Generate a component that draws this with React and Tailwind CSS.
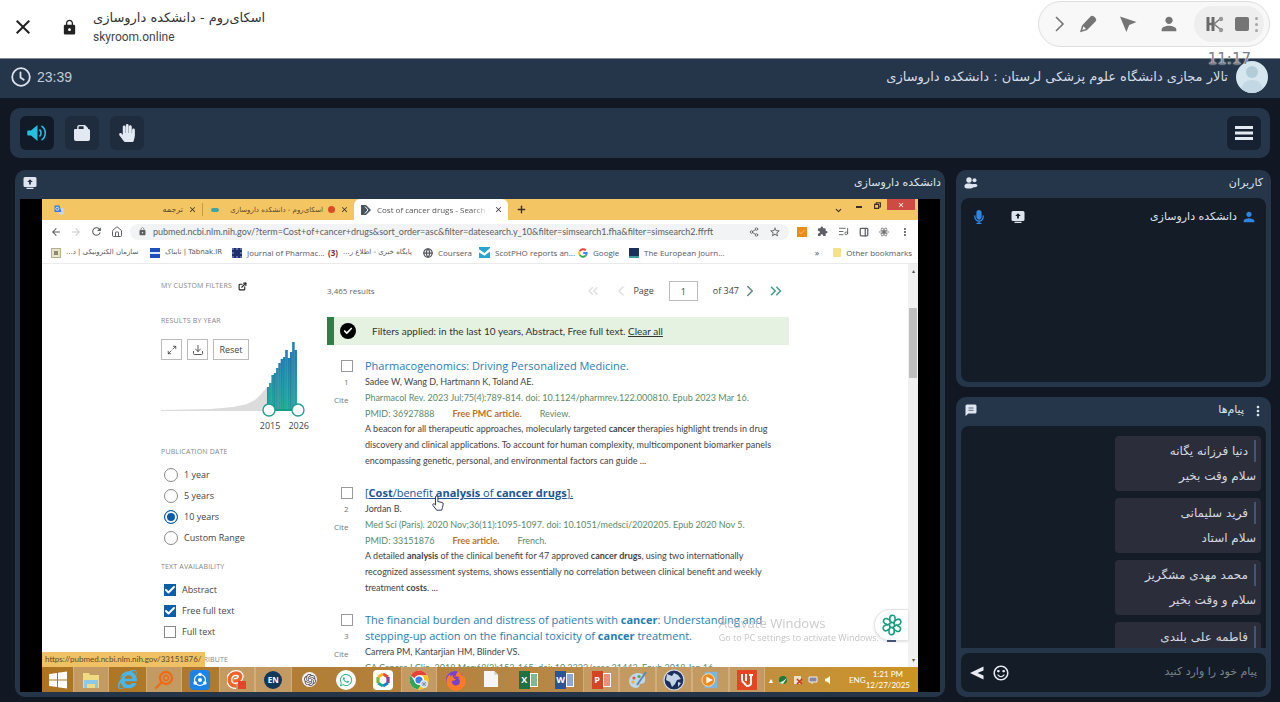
import React from "react";
import {
  MdClose, MdLock, MdPerson, MdMoreVert,
  MdArrowBack, MdArrowForward, MdRefresh, MdExtension, MdStarBorder, MdSentimentSatisfiedAlt,
} from "react-icons/md";
import { FaHandPaper, FaInternetExplorer, FaWhatsapp, FaFirefoxBrowser, FaMicrophone } from "react-icons/fa";
import { SiOpenai } from "react-icons/si";
import {
  Home, Share2, ChevronLeft, ChevronRight, ChevronsLeft, ChevronsRight, ChevronDown,
  Globe, Download, ExternalLink, ListMusic, PanelRight, Maximize2, Plus, Check,
} from "lucide-react";

const fa = "font-['DejaVu_Sans',sans-serif]";

function ScreenIcon({ className }) {
  return (
    <svg viewBox="0 0 14 14" className={className} fill="currentColor" aria-hidden="true">
      <path fillRule="evenodd" d="M2 1h10a1.500 1.500 0 0 1 1.500 1.500v7A1.500 1.500 0 0 1 12 11H2A1.500 1.500 0 0 1 .5 9.500v-7A1.500 1.500 0 0 1 2 1Zm5 2.300L4.200 6h1.900v2.400h1.800V6h1.900L7 3.300Z" />
      <path d="M3.500 11.700h7V13h-7z" />
    </svg>
  );
}

function TopBar() {
  return (
    <header className="flex h-[58px] shrink-0 items-start justify-between bg-white">
      <div className="flex items-center gap-[26px] pt-2 pl-[11px]">
        <button aria-label="Close" className="text-[#222]"><MdClose className="size-6" /></button>
        <div className="flex items-center gap-[15px]">
          <MdLock className="size-[17px] text-[#222]" />
          <div className="flex flex-col">
            <span dir="rtl" lang="fa" className={`${fa} text-[13px] leading-5 text-[#333]`}>اسکای‌روم - دانشکده داروسازی</span>
            <span className="font-['Roboto',sans-serif] text-xs leading-[18px] text-[#444]">skyroom.online</span>
          </div>
        </div>
      </div>
      <div className="mt-px mr-[10px] flex h-[46px] w-[232px] items-center rounded-full border border-[#dedede] bg-[#f8f8f8] pr-[5px] pl-[10px] text-[#757575]">
        <button aria-label="Collapse">
          <svg viewBox="0 0 20 20" className="size-5" fill="none" stroke="currentColor" strokeWidth="1.600"><path d="m7 3 7 7-7 7" /></svg>
        </button>
        <button aria-label="Draw" className="ml-[9px]">
          <svg viewBox="0 0 20 20" className="size-5" fill="currentColor">
            <path fillRule="evenodd" d="M12.500 2.500a2.500 2.500 0 0 1 3.500 0l1.500 1.500a2.500 2.500 0 0 1 0 3.500l-8.700 8.800-6.800 2 2-6.900 8.500-8.900ZM5.400 12.300l-1.100 3.800 3.700-1.200-2.600-2.600Z" />
          </svg>
        </button>
        <button aria-label="Pointer" className="ml-5">
          <svg viewBox="0 0 20 20" className="size-5" fill="currentColor"><path d="M2 2.500 18.500 8l-7.300 3-2.800 7L2 2.500Z" /></svg>
        </button>
        <button aria-label="Person" className="ml-5"><MdPerson className="size-[22px]" /></button>
        <div className="ml-[14px] flex h-9 flex-1 items-center rounded-full bg-[#eeeeee] pl-[11px]">
          <button aria-label="Share">
            <svg viewBox="0 0 20 20" className="size-5" fill="none" stroke="#777">
              <path d="M3 3v14M8 3v14" strokeWidth="3" stroke="#6a6a6a" />
              <path d="M3 10h6" strokeWidth="2.500" stroke="#6a6a6a" />
              <path d="m15 5-6 5 6 5" strokeWidth="1.500" />
              <circle cx="16" cy="5" r="2.200" fill="#999" stroke="none" /><circle cx="16" cy="16" r="2.200" fill="#999" stroke="none" />
            </svg>
          </button>
          <button aria-label="Stop" className="ml-[10px] size-[14px] rounded-[2px] bg-[#757575]" />
          <button aria-label="More" className="ml-[6px] flex flex-col gap-[3px]">
            <i className="size-[3px] rounded-full bg-[#a5a5a5]" /><i className="size-[3px] rounded-full bg-[#a5a5a5]" /><i className="size-[3px] rounded-full bg-[#a5a5a5]" />
          </button>
        </div>
      </div>
    </header>
  );
}

function RoomBar() {
  return (
    <div className="relative flex h-10 shrink-0 items-center justify-between border-t border-[#7c8795] bg-[#25354a] pr-3 pb-[3px] pl-[11px]">
      <div className="flex items-center gap-[6px] text-[#dbe3ee]">
        <svg viewBox="0 0 20 20" className="size-5" fill="none" stroke="currentColor" strokeWidth="1.800" strokeLinecap="round">
          <circle cx="10" cy="10" r="8.800" /><path d="M9.500 5.500v5l3.200 2.300" />
        </svg>
        <time className="font-['Liberation_Sans',sans-serif] text-sm leading-4 text-[#c3ccd8]">23:39</time>
      </div>
      <div className="flex items-center gap-2">
        <h1 dir="rtl" lang="fa" className={`${fa} text-[13px] leading-5 text-[#d5dce6]`}>تالار مجازی دانشگاه علوم پزشکی لرستان : دانشکده داروسازی</h1>
        <div className="size-8 overflow-hidden rounded-full bg-[#d5e6ef]">
          <svg viewBox="0 0 32 32" className="size-8"><circle cx="16" cy="11" r="6" fill="#b4cbd8" /><path d="M5 32c0-9 4-13 11-13s11 4 11 13Z" fill="#c2d8e4" /></svg>
        </div>
      </div>
      <span className="absolute -top-2 right-[29px] font-['DejaVu_Sans',sans-serif] text-[15px] leading-4 text-[#7b828c] [text-shadow:0_0_1px_#fff,0_0_2px_#fff]">11:17</span>
    </div>
  );
}

function ToolBar() {
  return (
    <nav className="mx-[10px] mt-[10px] flex h-[50px] shrink-0 items-center justify-between rounded-[10px] bg-[#25354a] pr-[9px] pl-[10px] text-[#e3e9f2]">
      <div className="flex gap-[11px]">
        <button aria-label="Sound" className="grid size-[34px] place-items-center rounded-md bg-[#111b28] text-[#26bfe2]">
          <svg viewBox="0 0 20 18" className="h-[18px] w-5" fill="currentColor">
            <path d="M1 6.500h3L10.500 1v16L4 11.500H1A1 1 0 0 1 .3 11V7a1 1 0 0 1 .7-.5Z" />
            <path d="M12.500 5.500c2 1.500 2 5.500 0 7M14.500 2c5 3 5 11 0 14" fill="none" stroke="currentColor" strokeWidth="1.600" />
          </svg>
        </button>
        <button aria-label="Files" className="grid size-[34px] place-items-center rounded-md bg-[#1f2c3d]">
          <svg viewBox="0 0 18 18" className="size-[18px]" fill="currentColor">
            <path fillRule="evenodd" d="M2 5h2.200V3a2 2 0 0 1 2-2H12l3 3v1h.500A1.500 1.500 0 0 1 17 6.500V15a2 2 0 0 1-2 2H3a2 2 0 0 1-2-2V6a1 1 0 0 1 1-1Zm3.600 0h5V2.300H6.500a1 1 0 0 0-.9 1V5Z" />
          </svg>
        </button>
        <button aria-label="Raise hand" className="grid size-[34px] place-items-center rounded-md bg-[#1f2c3d]"><FaHandPaper className="size-[18px]" /></button>
      </div>
      <button aria-label="Menu" className="grid size-[34px] place-items-center rounded-md bg-[#162231]">
        <svg viewBox="0 0 18 16" className="h-4 w-[18px]" fill="currentColor"><path d="M0 1h18v3H0zM0 6.500h18v3H0zM0 12h18v3H0z" /></svg>
      </button>
    </nav>
  );
}

function TabStrip() {
  return (
    <div className="flex h-[21px] shrink-0 items-stretch bg-[#f4c663] text-[8px] leading-[10px] text-[#5c4a28]">
      <div className="flex w-[160px] items-center pl-3">
        <svg viewBox="0 0 10 10" className="size-[10px]"><path d="M3 3h6.500v6.500H5z" fill="#c9d6ea" /><path d="M.5.500h5L7.500 7h-7z" fill="#3f7de0" /><circle cx="3.300" cy="3.700" r="1.500" fill="none" stroke="#fff" strokeWidth=".8" /></svg>
        <span dir="rtl" lang="fa" className={`${fa} ml-auto`}>ترجمه</span>
        <MdClose className="mx-[5px] size-[9px] text-[#333]" />
      </div>
      <div className="my-1 border-l border-[#c49a45]" />
      <div className="flex w-[151px] items-center pl-2">
        <span className="h-1 w-2 rounded-full bg-[#3aa6a8]" />
        <span dir="rtl" lang="fa" className={`${fa} ml-auto text-[7px] whitespace-nowrap`}>اسکای‌روم - دانشکده داروسازی</span>
        <span className="mx-[5px] size-[7px] shrink-0 rounded-full bg-[#dd4b25]" />
        <MdClose className="mr-[5px] size-[9px] shrink-0 text-[#333]" />
      </div>
      <div className="flex w-[154px] items-center rounded-t-md bg-white pl-[7px] text-[#555]">
        <svg viewBox="0 0 10 10" className="size-[10px] shrink-0"><path d="M0 0h5l5 5-5 5H0z" fill="#4a545e" /><path d="m4 1.500 3 3.500-3 3.500" stroke="#fff" fill="none" /></svg>
        <span className="ml-[6px] flex-1 overflow-hidden whitespace-nowrap [mask-image:linear-gradient(to_right,#000_85%,transparent)]">Cost of cancer drugs - Search Re</span>
        <MdClose className="mx-[5px] size-[9px] shrink-0 text-[#333]" />
      </div>
      <button aria-label="New tab" className="pl-2"><Plus className="size-[11px] text-[#3b3020]" strokeWidth={3} /></button>
      <div className="ml-auto flex items-start pr-[3px] text-[#3b3020]">
        <ChevronDown className="mt-[7px] mr-[13px] size-[9px]" strokeWidth={3} />
        <button aria-label="Minimize" className="mt-[7px] mr-3 h-[2px] w-[6px] bg-current" />
        <button aria-label="Restore" className="mt-[3px] mr-[6px]">
          <svg viewBox="0 0 8 8" className="size-[7px]" fill="none" stroke="currentColor" strokeWidth="1.300"><path d="M.7 2.700h4.600v4.600H.7zM2.500 2.500V.8h4.800v4.700H5.500" /></svg>
        </button>
        <button aria-label="Close window" className="grid h-[11px] w-7 place-items-center bg-[#ce4a45]"><MdClose className="size-2 text-white" /></button>
      </div>
    </div>
  );
}

function AddressBar() {
  return (
    <div className="flex h-[23px] shrink-0 items-center bg-white pr-[7px] pl-2 text-[#5c5f63]">
      <div className="flex items-center gap-2">
        <MdArrowBack className="size-3" />
        <MdArrowForward className="size-3 text-[#ccc]" />
        <MdRefresh className="size-[13px]" />
        <Home className="size-3" />
      </div>
      <div className="ml-[7px] flex h-4 min-w-0 flex-1 items-center rounded-full bg-[#f2f3f4] px-2">
        <MdLock className="size-[9px] shrink-0" />
        <input aria-label="Address" readOnly className="ml-[6px] min-w-0 flex-1 bg-transparent font-['Lato',sans-serif] text-[9px] outline-none" defaultValue="pubmed.ncbi.nlm.nih.gov/?term=Cost+of+cancer+drugs&sort_order=asc&filter=datesearch.y_10&filter=simsearch1.fha&filter=simsearch2.ffrft" />
        <Share2 className="size-[10px]" />
        <MdStarBorder className="ml-[10px] size-3" />
      </div>
      <div className="ml-2 flex items-center gap-[10px]">
        <span className="grid size-[10px] place-items-center bg-[#f08a16]"><Check className="size-2 text-[#ffd9a8]" /></span>
        <MdExtension className="size-[11px]" />
        <ListMusic className="size-[11px]" />
        <PanelRight className="size-[10px]" strokeWidth={3} />
        <svg viewBox="0 0 12 12" className="size-[10px]" fill="none" stroke="#888" strokeWidth="1"><ellipse cx="6" cy="6" rx="5.500" ry="2" /><ellipse cx="6" cy="6" rx="5.500" ry="2" transform="rotate(60 6 6)" /><ellipse cx="6" cy="6" rx="5.500" ry="2" transform="rotate(120 6 6)" /><circle cx="6" cy="6" r="1.500" fill="#555" /></svg>
        <MdMoreVert className="size-3" />
      </div>
    </div>
  );
}

function Mark({ icon, children, rtl, width }) {
  return (
    <a href="#" className={`flex shrink-0 items-center gap-[5px] ${width}`}>
      {icon}
      <span dir={rtl ? "rtl" : "ltr"} className={rtl ? "font-['DejaVu_Sans',sans-serif] text-[7px] whitespace-nowrap" : "text-[8px] whitespace-nowrap"}>{children}</span>
    </a>
  );
}

function Bookmarks() {
  return (
    <div className="flex h-[21px] shrink-0 items-center border-b border-[#e9eaec] bg-white pr-[6px] pb-[1px] pl-[9px] text-[#55585c]">
      <Mark rtl width="w-[99px]" icon={<span className="grid size-[10px] shrink-0 place-items-center border border-[#b3b08c] bg-[#e4e2cc]"><i className="size-1 bg-[#8f8c6c]" /></span>}>سازمان الکترونیکی | د...</Mark>
      <Mark rtl width="w-[82px]" icon={<span className="flex size-[10px] shrink-0 items-center bg-[#1c50c0]"><i className="h-[2px] w-full bg-[#dfe7fb]" /></span>}>Tabnak.IR | تابناک</Mark>
      <Mark width="w-[96px]" icon={<span className="size-[10px] shrink-0 border-2 border-dotted border-[#5c6cae] bg-[#20306f]" />}>Journal of Pharmac...</Mark>
      <Mark rtl width="w-[95px]" icon={<b className="shrink-0 text-[8px] text-[#7d2b2b]">(3)</b>}>پایگاه خبری - اطلاع ر...</Mark>
      <Mark width="w-14" icon={<Globe className="size-[10px] shrink-0" strokeWidth={3} />}>Coursera</Mark>
      <Mark width="w-[99px]" icon={<svg viewBox="0 0 10 10" className="size-[11px] shrink-0"><path fill="#27a5cf" d="M0 0h10v10H0z" /><path fill="#fff" d="m0 2 5 3.500L10 1v3L5 8 0 5z" /></svg>}>ScotPHO reports an...</Mark>
      <Mark width="w-[51px]" icon={
        <svg viewBox="0 0 24 24" className="size-[10px] shrink-0" fill="none" strokeWidth="4.500">
          <path stroke="#ea4335" d="M4.200 7.500A9 9 0 0 1 18.500 5.700" /><path stroke="#fbbc05" d="M4.200 16.500a9 9 0 0 1 0-9" /><path stroke="#34a853" d="M18 18.700A9 9 0 0 1 4.200 16.500" /><path stroke="#4285f4" d="M12.500 12H21a9 9 0 0 1-3 6.700" />
        </svg>}>Google</Mark>
      <Mark width="w-[90px]" icon={<span className="size-[10px] shrink-0 border-b-2 border-[#3c9aa0] bg-[#19305c]" />}>The European Journ...</Mark>
      <div className="ml-auto flex items-center gap-[14px]">
        <span className="text-[9px]">»</span>
        <Mark width="w-auto" icon={<span className="h-[9px] w-2 rounded-[1px] bg-[#f6e08a]" />}>Other bookmarks</Mark>
      </div>
    </div>
  );
}

const bars = [23, 27, 35, 37, 42, 47, 51, 53, 60, 52, 58, 68, 60];

function Timeline() {
  return (
    <div className="mt-3 grid w-[148px]">
      <div className="flex gap-[5px] [grid-area:1/1]">
        <button aria-label="Expand" className="grid size-[21px] place-items-center border border-[#bbb] text-[#444]"><Maximize2 className="size-[10px]" /></button>
        <button aria-label="Download" className="grid size-[21px] place-items-center border border-[#bbb] text-[#555]"><Download className="size-3" /></button>
        <button className="h-[21px] w-9 border border-[#bbb] text-[9px] text-[#444]">Reset</button>
      </div>
      <svg viewBox="0 0 148 80" className="mt-[1px] h-20 w-[148px] [grid-area:1/1]">
        <defs><linearGradient id="yr" gradientUnits="userSpaceOnUse" x1="0" y1="0" x2="0" y2="70"><stop offset="0.250" stopColor="#2380ba" /><stop offset="1" stopColor="#25b296" /></linearGradient></defs>
        <path d="M0 71v-1l50-1 22-2 14-3 8-4 6-6 6-7v24Z" fill="#dcdcdc" />
        {bars.map((h, i) => <rect key={i} x={106 + i * 2.300} y={70 - h} width="2.400" height={h} fill="url(#yr)" />)}
        {bars.map((h, i) => <rect key={i} x={106 + i * 2.300} y={70 - h} width=".6" height={h} fill="#176f94" opacity=".7" />)}
        <path d="M107 70h30" stroke="#159b8c" strokeWidth="2" />
        <circle cx="108" cy="70" r="6" fill="#fff" stroke="#1c9c93" strokeWidth="1.300" /><circle cx="137" cy="70" r="6" fill="#fff" stroke="#1c9c93" strokeWidth="1.300" />
      </svg>
      <div className="flex justify-end gap-2 text-[9px] leading-3 text-[#444]"><span>2015</span><span>2026</span></div>
    </div>
  );
}

const heading = "text-[7px] leading-3 tracking-wide text-[#858585] uppercase";

function Choice({ type, name, label, on }) {
  return (
    <label className="flex h-[21px] items-center gap-[6px] text-[9px] text-[#444]">
      {type === "radio" ? (
        <input type="radio" name={name} defaultChecked={on} className="ml-[3px] size-[14px] appearance-none rounded-full border border-[#888] bg-white checked:border-[#0a5ba8] checked:bg-[#0a5ba8] checked:shadow-[inset_0_0_0_2px_#fff]" />
      ) : (
        <span className="ml-[3px] grid size-3">
          <input type="checkbox" defaultChecked={on} className="size-3 appearance-none border border-[#888] [grid-area:1/1] checked:border-[#0b5ea8] checked:bg-[#0b5ea8]" />
          {on && <Check className="size-3 text-white [grid-area:1/1]" strokeWidth={4} />}
        </span>
      )}
      {label}
    </label>
  );
}

function Filters() {
  return (
    <aside className="w-[166px] shrink-0 pt-4">
      <h2 className={`${heading} flex items-center gap-[6px]`}>My custom filters <ExternalLink className="size-[9px] text-[#222]" strokeWidth={3} /></h2>
      <h2 className={`${heading} mt-[23px]`}>Results by year</h2>
      <Timeline />
      <fieldset className="mt-[14px]">
        <legend className={heading}>Publication date</legend>
        <div className="mt-[6px]">
          <Choice type="radio" name="date" label="1 year" />
          <Choice type="radio" name="date" label="5 years" />
          <Choice type="radio" name="date" label="10 years" on />
          <Choice type="radio" name="date" label="Custom Range" />
        </div>
      </fieldset>
      <fieldset className="mt-[13px]">
        <legend className={heading}>Text availability</legend>
        <div className="mt-[6px]">
          <Choice type="checkbox" label="Abstract" on />
          <Choice type="checkbox" label="Free full text" on />
          <Choice type="checkbox" label="Full text" />
        </div>
      </fieldset>
      <h2 className={`${heading} mt-3`}>Article attribute</h2>
    </aside>
  );
}

function Article({ n, title, authors, journal, pmid, free, kind, visited, children }) {
  return (
    <article className="mb-4 flex">
      <div className="w-[38px] shrink-0 text-[8px] text-[#777]">
        <input type="checkbox" aria-label={`Select result ${n}`} className="mt-[2px] ml-[14px] block size-3 appearance-none border border-[#999] bg-white" />
        <div className="mt-[3px] ml-[17px] leading-[14px]">{n}</div>
        <button className="mt-1 ml-[7px] block leading-[14px]">Cite</button>
      </div>
      <div className="min-w-0 flex-1 font-['Lato',sans-serif] text-[9px] leading-4 text-[#444]">
        <h3 className="font-['Open_Sans',sans-serif] text-[11px] leading-4"><a href="#" className={visited ? "text-[#205493] underline" : "text-[#1f7db3]"}>{title}</a></h3>
        <p>{authors}</p>
        <p className="text-[#5b8a68]">{journal}</p>
        <p className="flex h-[15px] gap-[18px] text-[#5b8a68]"><span>PMID: {pmid}</span><b className="text-[#c0701c]">{free}</b><span>{kind}</span></p>
        <p>{children}</p>
      </div>
    </article>
  );
}

function Results() {
  return (
    <main className="w-[462px] shrink-0 pt-[15px]">
      <div className="flex h-6 items-center text-[8px] text-[#444]">
        <span className="text-[#666]">3,465 results</span>
        <div className="ml-auto flex items-center pr-1 text-[9px]">
          <ChevronsLeft className="size-4 text-[#ddd]" />
          <ChevronLeft className="ml-3 size-4 text-[#ddd]" />
          <label htmlFor="page" className="ml-1">Page</label>
          <input id="page" defaultValue="1" className="mx-[15px] h-5 w-[29px] border border-[#bbb] text-center text-[9px]" />
          <span>of 347</span>
          <ChevronRight className="ml-[2px] size-[18px] text-[#5a8a80]" />
          <ChevronsRight className="ml-2 size-[18px] text-[#3f9b8e]" />
        </div>
      </div>
      <div className="mt-[14px] flex h-7 items-center border-l-[7px] border-[#2c8046] bg-[#e5f2e2] pl-[6px] font-['Lato',sans-serif] text-[10px] text-[#333]">
        <span className="mr-4 grid size-4 place-items-center rounded-full bg-black"><Check className="size-[10px] text-white" strokeWidth={4} /></span>
        Filters applied: in the last 10 years, Abstract, Free full text.&nbsp;<a href="#" className="underline">Clear all</a>
      </div>
      <div className="mt-[13px]">
        <Article n="1" title="Pharmacogenomics: Driving Personalized Medicine." authors="Sadee W, Wang D, Hartmann K, Toland AE." journal="Pharmacol Rev. 2023 Jul;75(4):789-814. doi: 10.1124/pharmrev.122.000810. Epub 2023 Mar 16." pmid="36927888" free="Free PMC article." kind="Review.">
          A beacon for all therapeutic approaches, molecularly targeted <b>cancer</b> therapies highlight trends in drug<br />discovery and clinical applications. To account for human complexity, multicomponent biomarker panels<br />encompassing genetic, personal, and environmental factors can guide ...
        </Article>
        <Article n="2" visited title={<>[<b>Cost</b>/benefit <b>analysis</b> of <b>cancer drugs</b>].</>} authors="Jordan B." journal="Med Sci (Paris). 2020 Nov;36(11):1095-1097. doi: 10.1051/medsci/2020205. Epub 2020 Nov 5." pmid="33151876" free="Free article." kind="French.">
          A detailed <b>analysis</b> of the clinical benefit for 47 approved <b>cancer drugs</b>, using two internationally<br />recognized assessment systems, shows essentially no correlation between clinical benefit and weekly<br />treatment <b>costs</b>. ...
        </Article>
        <Article n="3" title={<>The financial burden and distress of patients with <b>cancer</b>: Understanding and<br />stepping-up action on the financial toxicity of <b>cancer</b> treatment.</>} authors="Carrera PM, Kantarjian HM, Blinder VS." journal="CA Cancer J Clin. 2018 Mar;68(2):153-165. doi: 10.3322/caac.21443. Epub 2018 Jan 16." pmid="29338071" free="Free PMC article." kind="Review." />
      </div>
    </main>
  );
}

function Office({ letter, color, page }) {
  return (
    <span className="flex h-[18px] items-center">
      <b className="grid h-[18px] w-[11px] place-items-center text-[9px] text-white" style={{ background: color }}>{letter}</b>
      <i className="h-[14px] w-2 border border-white" style={{ background: page }} />
    </span>
  );
}

const apps = [
  { name: "Explorer", lit: true, icon: <svg viewBox="0 0 20 20" className="size-5"><path fill="#f0da83" d="M2 3h6l1 2h9v13H2z" /><path fill="#8cc9e8" d="M3 10h14v8h-3v-4H6v4H3z" /></svg> },
  { name: "Internet Explorer", icon: <FaInternetExplorer className="size-[19px] text-[#45b7ea]" /> },
  { name: "Search", lit: true, icon: <svg viewBox="0 0 20 20" className="size-5" fill="none" stroke="#ef6a16" strokeWidth="2.300"><circle cx="12" cy="8" r="6" /><circle cx="12" cy="8" r="2.500" strokeWidth="1.400" /><path d="m7.500 12.500-6 6" /></svg> },
  { name: "Share", icon: <svg viewBox="0 0 20 20" className="size-5"><rect width="20" height="20" rx="4" fill="#1c83e6" /><circle cx="10" cy="10" r="5.500" fill="none" stroke="#fff" strokeWidth="1.200" /><circle cx="10" cy="10" r="2" fill="#fff" /><circle cx="10" cy="4.500" r="1.800" fill="#fff" /><circle cx="5.200" cy="13" r="1.800" fill="#fff" /><circle cx="14.800" cy="13" r="1.800" fill="#fff" /></svg> },
  { name: "Reader", lit: true, icon: <svg viewBox="0 0 20 20" className="size-5"><path d="M9 16C-1 16 1 3 9 3c7 0 6 8-2 8" fill="none" stroke="#fff" strokeWidth="6" /><path d="M9 16C-1 16 1 3 9 3c7 0 6 8-2 8" fill="none" stroke="#f0642a" strokeWidth="3.500" /><path d="M11 11h8v8h-8z" fill="#e4432c" /></svg> },
  { name: "Dictionary", lit: true, icon: <span className="grid size-[18px] place-items-center rounded-full bg-[#12375a] text-[8px] font-bold text-white">EN</span> },
  { name: "ChatGPT", icon: <span className="grid size-[15px] place-items-center rounded-full bg-[#f2f0f2]"><SiOpenai className="size-3 text-[#4d4650]" /></span> },
  { name: "WhatsApp", icon: <span className="grid size-5 place-items-center rounded-full bg-white"><FaWhatsapp className="size-[14px] text-[#38b68c]" /></span> },
  { name: "Gallery", icon: <svg viewBox="0 0 20 20" className="size-5"><rect width="20" height="20" rx="4" fill="#fff" /><g fill="none" strokeWidth="3.200"><path stroke="#e84a3a" d="m10 4 5 3" /><path stroke="#8b3f98" d="M15 7v6" /><path stroke="#2d78c8" d="m15 13-5 3" /><path stroke="#22a88f" d="m10 16-5-3" /><path stroke="#7ab540" d="M5 13V7" /><path stroke="#f3b529" d="m5 7 5-3" /></g></svg> },
  { name: "Chrome", lit: true, icon: <svg viewBox="0 0 20 20" className="size-5"><circle cx="10" cy="10" r="9.500" fill="#fff" /><path fill="#e64335" d="M1.800 5.200a9.500 9.500 0 0 1 16.400 0H10a5 5 0 0 0-4.500 3z" /><path fill="#34a453" d="M1.800 5.200A9.500 9.500 0 0 0 9 19.500l3.500-5.200A5 5 0 0 1 5.300 11z" /><path fill="#fbc116" d="M18.200 5.200A9.500 9.500 0 0 1 9 19.500l4.500-6.500a5 5 0 0 0-.5-7.800z" /><circle cx="10" cy="10" r="4.600" fill="#fff" /><circle cx="10" cy="10" r="3.600" fill="#3d7de4" /><circle cx="15" cy="14" r="4" fill="#dfe7ee" /><path d="M12.500 14h5M15 11.500v5M13 12l4 4M17 12l-4 4" stroke="#7286a0" strokeWidth=".7" /></svg> },
  { name: "Firefox", icon: <span className="grid size-[18px] place-items-center rounded-full bg-[#7542d5]"><FaFirefoxBrowser className="size-5 text-[#ff7a24]" /></span> },
  { name: "Document", icon: <svg viewBox="0 0 16 18" className="h-[17px] w-[15px]"><path fill="#f5f5f5" d="M0 0h11l4 4v13H0z" /><path fill="#ccc" d="M11 0v4h4z" /></svg> },
  { name: "Excel", icon: <Office letter="X" color="#1d7145" page="#7fb896" /> },
  { name: "Word", icon: <Office letter="W" color="#2a5699" page="#8aa7d6" /> },
  { name: "PowerPoint", lit: true, icon: <Office letter="P" color="#d34525" page="#ea9077" /> },
  { name: "Paint", lit: true, icon: <svg viewBox="0 0 20 20" className="size-5"><path fill="#bdd8e8" d="M10 3c6 0 8 4 7 8s-4 2-5 3 0 4-4 4-7-3-7-7 4-8 9-8Z" /><circle cx="6" cy="8" r="1.600" fill="#e05a3a" /><circle cx="11" cy="6.500" r="1.600" fill="#59a64a" /><circle cx="5" cy="12" r="1.600" fill="#e8b52a" /><path d="m9 15 9-13" stroke="#5c88b8" strokeWidth="2" /></svg> },
  { name: "Globe", lit: true, icon: <svg viewBox="0 0 22 22" className="size-[22px]"><circle cx="11" cy="11" r="10" fill="#1c2e5c" stroke="#d3dbe8" strokeWidth="1.200" /><path fill="#c3d4e6" d="M4 5l5 2 2-3 4 2 3 4-4 1-2 4-3 3-2-5-4-2zM15 13l3 1-3 4z" /></svg> },
  { name: "Media Player", lit: true, icon: <svg viewBox="0 0 20 20" className="size-[18px]"><path fill="#7db6df" d="M4 1h14v18H4z" /><circle cx="8" cy="10" r="7" fill="#f18a1d" stroke="#ffe1b8" /><path fill="#fff" d="m6 6 7 4-7 4z" /></svg> },
  { name: "PDF", lit: true, icon: <svg viewBox="0 0 20 20" className="size-5"><path fill="#e24622" d="M0 0h20v20H0z" /><path d="M5 4v6c0 3 4 3 4 6M9 4v7M14 4v9c0 3-3 3-5 3M12 5h4" fill="none" stroke="#fff" strokeWidth="2" /></svg> },
];

function Taskbar() {
  return (
    <footer className="relative flex h-[25px] shrink-0 items-stretch bg-linear-to-r from-[#ac7420] via-[#b98b4d] via-70% to-[#cd9420] text-white">
      <button aria-label="Start" className="grid w-[31px] place-items-center">
        <svg viewBox="0 0 18 18" className="size-[18px]" fill="#fff"><path d="m0 3 8-1v6.500H0zM9 1.800 18 .5v8H9zM0 9.500h8V16l-8-1zM9 9.500h9v8L9 16.200z" /></svg>
      </button>
      <div className="flex flex-1">
        {apps.map((a) => (
          <button key={a.name} aria-label={a.name} className={a.lit ? "grid flex-1 place-items-center border-x border-[#d1ae7c] bg-[#c39a62]" : "grid flex-1 place-items-center border-x border-transparent"}>{a.icon}</button>
        ))}
      </div>
      <div className="flex w-[153px] items-center pr-2">
        <div className="flex items-center gap-[5px] pl-1">
          <span className="text-[8px]">▴</span>
          <svg viewBox="0 0 10 10" className="size-[10px]"><circle cx="5" cy="5" r="4" fill="#1d7a3b" /><path d="m1 8 4 1 4-6-4 3z" fill="#d4efdd" /></svg>
          <svg viewBox="0 0 10 10" className="size-[10px]"><path d="M1 1h7v8H1z" fill="#e9dfcb" /><path d="m4 4 5 5M9 4 4 9" stroke="#cb3222" strokeWidth="1.600" /></svg>
          <svg viewBox="0 0 10 10" className="size-[10px]"><path d="M1 2h8v5H1zM4 7v2" fill="#8a86a4" stroke="#eee" /></svg>
          <svg viewBox="0 0 10 10" className="size-[10px]"><path d="M2 3.500h2L7 1v8L4 6.500H2z" fill="#fff" /></svg>
        </div>
        <span className="ml-4 font-['Lato',sans-serif] text-[8px]">ENG</span>
        <time className="ml-auto text-center font-['Lato',sans-serif] text-[8px] leading-[11px]">1:21 PM<br />12/27/2025</time>
      </div>
    </footer>
  );
}

const petals = ["rotate(0 12 12)", "rotate(60 12 12)", "rotate(120 12 12)", "rotate(180 12 12)", "rotate(240 12 12)", "rotate(300 12 12)"];

function SharedScreen() {
  return (
    <div className="mx-[5px] mb-[5px] flex min-h-0 flex-1 bg-black px-[22px]">
      <div className="flex min-w-0 flex-1 flex-col overflow-hidden font-['Open_Sans',sans-serif]">
        <TabStrip />
        <AddressBar />
        <Bookmarks />
        <div className="relative flex min-h-0 flex-1 overflow-hidden bg-white pl-[119px]">
          <Filters />
          <Results />
          <div className="ml-auto flex w-[10px] flex-col items-center justify-between bg-[#f1f1f2] py-1 text-[6px] leading-[6px] text-[#555]">
            <span>▴</span>
            <i className="mt-[34px] mb-auto h-[70px] w-2 bg-[#bfbfc0]" />
            <span>▾</span>
          </div>
          <span className="absolute bottom-0 left-0 bg-[#f0c064] pr-1 pl-[3px] font-['Lato',sans-serif] text-[8px] leading-[15px] text-[#5b4c2c]">https://pubmed.ncbi.nlm.nih.gov/33151876/</span>
          <div className="absolute right-[39px] bottom-[22px] text-[#bdbdbd]">
            <p className="text-[13px] leading-[15px] opacity-80">Activate Windows</p>
            <p className="text-[9px] leading-[14px] opacity-90">Go to PC settings to activate Windows.</p>
          </div>
          <div className="absolute right-[10px] bottom-[26px] grid h-8 w-[34px] place-items-center rounded-l-2xl border border-r-0 border-[#e4e4e4] bg-white shadow-sm">
            <svg viewBox="0 0 24 24" className="size-[22px]" fill="none" stroke="#169b80" strokeWidth="1.700">
              {petals.map((t) => <path key={t} transform={t} d="M12 9.200 9.600 7.800V4.200A2.900 2.900 0 0 1 15.200 3.300L15.500 8" />)}
              <circle cx="12" cy="12" r="2.800" />
            </svg>
            <span className="absolute bottom-[-2px] h-[2px] w-[9px] bg-[#45567a]" />
          </div>
          <svg viewBox="0 0 12 16" className="absolute top-[231px] left-[390px] h-4 w-3"><path d="M3.500 9V2a1.200 1.200 0 0 1 2.400 0v4.500l4.300 1a1.300 1.300 0 0 1 1 1.500l-.7 3.500-1 2.700H4.700L1 10.500a1 1 0 0 1 1.500-1.400L3.500 10z" fill="#fff" stroke="#353a60" strokeWidth="1" /></svg>
        </div>
        <Taskbar />
      </div>
    </div>
  );
}

const messages = [
  ["دنیا فرزانه یگانه", "سلام وقت بخیر"],
  ["فرید سلیمانی", "سلام استاد"],
  ["محمد مهدی مشگریز", "سلام و وقت بخیر"],
  ["فاطمه علی بلندی", "سلام"],
];

function Users() {
  return (
    <section className="flex h-[217px] shrink-0 flex-col rounded-[10px] bg-[#25354a] px-[5px] pb-[5px]">
      <div className="flex h-7 items-center justify-between px-[3px] pb-[2px] text-[#dfe5ee]">
        <svg viewBox="0 0 14 12" className="h-3 w-[14px]" fill="currentColor"><circle cx="5" cy="3" r="2.700" /><circle cx="10.500" cy="3.300" r="2" /><path d="M.5 8.500C1 6.800 3 6.500 5 6.500c1.500 0 2.500.2 3.300.7 1-.5 5-.6 5.200 1.300-.3 1.500-2.500 1.700-4 1.700-.5 1.500-8.500 2-9-.2z" /></svg>
        <h2 dir="rtl" lang="fa" className={`${fa} text-[11px]`}>کاربران</h2>
      </div>
      <div className="flex-1 rounded-lg bg-[#141c28] pt-[9px] pr-[9px] pl-[11px]">
        <div className="flex h-5 items-center text-[#dfe5ee]">
          <FaMicrophone className="size-[14px] text-[#2b87e3]" />
          <ScreenIcon className="ml-[25px] size-[14px]" />
          <span dir="rtl" lang="fa" className={`${fa} ml-auto text-[11px]`}>دانشکده داروسازی</span>
          <MdPerson className="ml-1 size-4 text-[#2b87e3]" />
        </div>
      </div>
    </section>
  );
}

function Chat() {
  return (
    <section className="flex min-h-0 flex-1 flex-col rounded-[10px] bg-[#25354a] px-[5px] pb-[5px]">
      <div className="flex h-[29px] shrink-0 items-center pb-[2px] pl-1 text-[#dfe5ee]">
        <svg viewBox="0 0 12 13" className="h-[13px] w-3"><path fill="currentColor" d="M2 .5h8A1.500 1.500 0 0 1 11.500 2v6A1.500 1.500 0 0 1 10 9.500H3.500L.5 12V2A1.500 1.500 0 0 1 2 .5Z" /><path d="M3.500 4h5M3.500 6.300h5" stroke="#5a6a80" /></svg>
        <h2 dir="rtl" lang="fa" className={`${fa} mr-[6px] ml-auto text-[11px]`}>پیام‌ها</h2>
        <button aria-label="Chat options"><MdMoreVert className="size-4" /></button>
      </div>
      <ul className="flex min-h-0 flex-1 flex-col items-end gap-[7px] overflow-hidden rounded-t-lg bg-[#141c28] pt-[10px] pr-[5px]">
        {messages.map(([name, text]) => (
          <li key={name} dir="rtl" lang="fa" className={`${fa} h-[55px] w-[146px] shrink-0 rounded bg-[#2b2e3a] px-[5px] pt-1 text-[12px] text-[#d5d9e0]`}>
            <p className="border-r-2 border-[#3c5878] pr-[6px] leading-[22px]">{name}</p>
            <p className="leading-7">{text}</p>
          </li>
        ))}
      </ul>
      <form className="mt-[5px] flex h-[39px] shrink-0 items-center gap-2 rounded-lg bg-[#141c28] px-[9px] text-[#e8ecf2]">
        <button type="button" aria-label="Send"><svg viewBox="0 0 14 14" className="size-[14px]" fill="currentColor"><path d="M0 7 13.500.5v4L7.500 7l6 2.500v4z" /></svg></button>
        <button type="button" aria-label="Emoji"><MdSentimentSatisfiedAlt className="size-[18px]" /></button>
        <input dir="rtl" lang="fa" aria-label="پیام" placeholder="پیام خود را وارد کنید" className={`${fa} min-w-0 flex-1 bg-transparent text-[11px] outline-none placeholder:text-[#7d848f]`} />
      </form>
    </section>
  );
}

export default function App() {
  return (
    <div className="flex h-screen flex-col overflow-hidden bg-[#111823]">
      <TopBar />
      <RoomBar />
      <ToolBar />
      <div className="flex min-h-0 flex-1 gap-[11px] pt-3 pr-[9px] pb-[5px] pl-[15px]">
        <section className="flex min-w-0 flex-1 flex-col rounded-[10px] bg-[#25354a]">
          <div className="flex h-[29px] shrink-0 items-center justify-between pr-1 pb-[3px] pl-2 text-[#dfe5ee]">
            <ScreenIcon className="size-[14px]" />
            <h2 dir="rtl" lang="fa" className={`${fa} text-[11px]`}>دانشکده داروسازی</h2>
          </div>
          <SharedScreen />
        </section>
        <div className="flex w-[315px] shrink-0 flex-col gap-[10px]">
          <Users />
          <Chat />
        </div>
      </div>
    </div>
  );
}
